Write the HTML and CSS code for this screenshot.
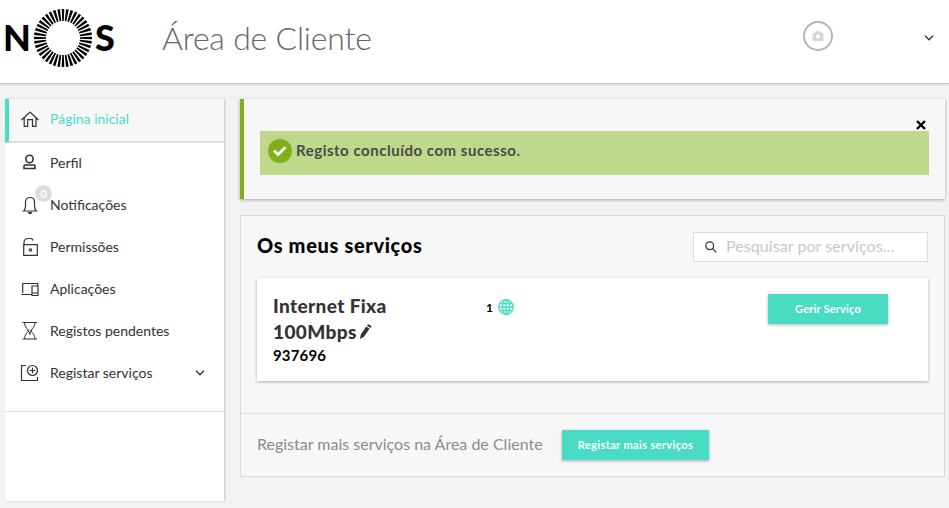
FILE: index.html
```
<!DOCTYPE html>
<html lang="pt">
<head>
  <meta charset="UTF-8">
  <meta name="viewport" content="width=device-width, initial-scale=1.0">
  <title>Área de Cliente</title>
  <link rel="stylesheet" href="styles.css">
</head>
<body>
  <header class="header">
    <a class="logo">
      <span class="logo-n">N</span>
      <svg class="logo-o" width="58" height="58" viewBox="0 0 58 58">
        <circle cx="29" cy="29" r="23" fill="none" stroke="#000" stroke-width="12" pathLength="400" stroke-dasharray="6 4" stroke-dashoffset="3"/>
      </svg>
      <span class="logo-s">S</span>
    </a>
    <h1 class="title">Área de Cliente</h1>
    <div class="user">
      <div class="avatar">
        <svg width="12" height="12" viewBox="0 0 12 12">
          <path fill="#d6d6d6" fill-rule="evenodd" d="M1.500 3H3l1-1.700h4L9 3h1.500q1 0 1 1v6q0 1-1 1h-9q-1 0-1-1V4q0-1 1-1zM6 4.300a2.100 2.100 0 1 0 0 4.200a2.100 2.100 0 1 0 0-4.200z"/>
        </svg>
      </div>
      <svg class="arrow" width="10" height="6" viewBox="0 0 10 6"><path d="M1 .8l4 4 4-4"/></svg>
    </div>
  </header>

  <div class="wrapper">
    <nav class="sidebar">
      <ul class="menu">
        <li class="active">
          <svg class="icon" viewBox="0 0 20 20"><path d="M1.500 11L10 3l8.500 8M4.200 9v8.300h3.500v-6.600h4.800v6.600h3.500V9"/></svg>
          <span>Página inicial</span>
        </li>
        <li>
          <svg class="icon thick" viewBox="0 0 20 20"><circle cx="9.500" cy="6" r="3.700"/><path d="M5 12h9a1 1 0 0 1 1 1v2.500h-11v-2.500a1 1 0 0 1 1-1z"/></svg>
          <span>Perfil</span>
        </li>
        <li>
          <svg class="icon" viewBox="0 0 20 20"><path d="M2.500 16h15M4 16c1-1.500 1.500-3 1.500-5V7c0-2.800 1.800-4.500 4.500-4.500s4.500 1.700 4.500 4.500v4c0 2 .5 3.500 1.500 5"/><path d="M8.500 17.500a1.600 1.600 0 0 0 3 0z" fill="#333"/></svg>
          <i class="badge">0</i>
          <span>Notificações</span>
        </li>
        <li>
          <svg class="icon" viewBox="0 0 20 20"><path d="M4 8.500V5.500c0-3 2-4 4.500-4h2c1.500 0 2.200.6 2.500 2M3.700 7.700h13.600v10.700H3.700z"/><circle cx="10.500" cy="13" r="1.200"/></svg>
          <span>Permissões</span>
        </li>
        <li>
          <svg class="icon" viewBox="0 0 20 20"><path d="M2.700 14V4.500h15V7M1.200 15.500h10.500M12 7h6v9.500h-6zM12 14h6"/></svg>
          <span>Aplicações</span>
        </li>
        <li>
          <svg class="icon thin" viewBox="0 0 20 20"><path d="M2.500 1.500h14.500M2.500 18h14.500M4.500 1.500c0 4 2 5.500 4.500 8.300-2.500 2.700-4.500 4.200-4.500 8.200M15 1.500c0 4-2 5.500-4.500 8.300 2.500 2.700 4.500 4.200 4.500 8.200M7.500 9l2.300 3.200L12 9M9.800 11v3"/></svg>
          <span>Registos pendentes</span>
        </li>
        <li>
          <svg class="icon" viewBox="0 0 20 20"><path d="M6 2.500H1.500V17.500h16V14"/><circle cx="12.500" cy="7.500" r="5"/><path d="M12.500 4.700v5.600M9.700 7.500h5.600"/></svg>
          <span>Registar serviços</span>
          <svg class="arrow" width="10" height="6" viewBox="0 0 10 6"><path d="M1 .8l4 4 4-4"/></svg>
        </li>
      </ul>
    </nav>

    <main class="content">
      <section class="alert">
        <svg class="close" width="10" height="10" viewBox="0 0 10 10"><path d="M1 1l8 8M9 1L1 9"/></svg>
        <div class="alert-msg">
          <svg width="24" height="24" viewBox="0 0 24 24"><circle cx="12" cy="12" r="12" fill="#7fb01b"/><path d="M6 11.500l4 4 7.500-7.300" fill="none" stroke="#fff" stroke-width="2.800"/></svg>
          <span>Registo concluído com sucesso.</span>
        </div>
      </section>

      <section class="panel">
        <div class="panel-head">
          <h2>Os meus serviços</h2>
          <label class="search">
            <svg width="12" height="12" viewBox="0 0 12 12"><circle cx="4.700" cy="4.700" r="3.900"/><path d="M7.500 7.500l3.800 3.800"/></svg>
            <input type="text" placeholder="Pesquisar por serviços...">
          </label>
        </div>
        <div class="card">
          <div class="service">
            <h3>Internet Fixa<br><span>100Mbps</span><svg width="12" height="15" viewBox="0 0 12 15"><path fill="#333" d="M0 15l.8-4.500L6.300 2.600l3.200 2.200-5.500 7.900zM7 1.600L7.900.4Q8.200 0 8.600.2l2.600 1.800q.4.3.1.700l-.9 1.300z"/></svg></h3>
            <p>937696</p>
          </div>
          <div class="count">
            <span>1</span>
            <svg width="16" height="16" viewBox="0 0 16 16"><circle cx="8" cy="8" r="7.300"/><ellipse cx="8" cy="8" rx="3.600" ry="7.300"/><path d="M8 .7v14.600M.7 8h14.600M2 4.500h12M2 11.500h12"/></svg>
          </div>
          <button class="btn manage">Gerir Serviço</button>
        </div>
        <div class="panel-foot">
          <p>Registar mais serviços na Área de Cliente</p>
          <button class="btn more">Registar mais serviços</button>
        </div>
      </section>
    </main>
  </div>
</body>
</html>
```
FILE: styles.css
```
*{
  box-sizing: border-box;
  margin: 0;
  padding: 0;
}
body{
  height: 508px;
  background: #f2f2f2;
  color: #333;
  font-family: Lato, "Open Sans", sans-serif;
  font-size: 14px;
  overflow: hidden;
}
svg{
  display: block;
  flex: none;
}
.header{
  display: flex;
  align-items: center;
  height: 84px;
  padding: 0 15px 8px 3px;
  background: #fff;
  border-bottom: 1px solid #c4c4c4;
  box-shadow: 0 1px 2px rgba(0,0,0,.12);
}
.logo{
  display: flex;
  align-items: center;
  width: 159px;
  color: #000;
  font-size: 36px;
  font-weight: 900;
  line-height: 56px;
}
.logo-n{
  width: 31px;
  padding-bottom: 1px;
}
.logo-s{
  margin-left: 3px;
  padding-bottom: 1px;
}
.title{
  color: #666;
  font-size: 32px;
  font-weight: 300;
  letter-spacing: -.2px;
  line-height: 40px;
  white-space: nowrap;
}
.user{
  display: flex;
  align-items: center;
  justify-content: space-between;
  width: 131px;
  margin-left: auto;
  margin-top: -4px;
}
.user .arrow{
  margin-top: 4px;
}
.avatar{
  display: flex;
  align-items: center;
  justify-content: center;
  width: 30px;
  height: 30px;
  border: 2px solid #b5b5b5;
  border-radius: 50%;
}
.arrow{
  fill: none;
  stroke: #333;
  stroke-width: 1.3;
}
.wrapper{
  display: flex;
  gap: 16px;
  padding: 15px 4px 0 5px;
}
.sidebar{
  width: 219px;
  height: 402px;
  background: #fff;
  box-shadow: 1px 0 2px rgba(0,0,0,.18);
}
.menu{
  list-style: none;
  padding-bottom: 16px;
  border-bottom: 1px solid #ddd;
}
.menu li{
  position: relative;
  display: flex;
  align-items: center;
  height: 42px;
  padding: 0 19px 2px 15px;
  white-space: nowrap;
}
.menu li span{
  margin-left: 10px;
  padding-bottom: 2px;
}
.menu .active{
  height: 44px;
  padding-left: 11px;
  background: #f7f7f7;
  border-left: 4px solid #4adbc5;
  border-bottom: 2px solid #ddd;
  color: #4adbc5;
}
.menu .arrow{
  margin-left: auto;
}
.icon{
  width: 20px;
  height: 20px;
  fill: none;
  stroke: #333;
  stroke-width: 1.2;
}
.thick{
  stroke-width: 1.6;
}
.thin{
  stroke-width: 1;
}
.badge{
  position: absolute;
  left: 30px;
  top: 0;
  width: 17px;
  height: 17px;
  border-radius: 50%;
  background: #ddd;
  color: #fff;
  font-size: 11px;
  font-style: normal;
  font-weight: 700;
  line-height: 17px;
  text-align: center;
}
.content{
  flex: 1;
}
.alert{
  position: relative;
  height: 100px;
  padding: 32px 16px 0;
  background: #f7f7f7;
  border-left: 4px solid #7fb01b;
  box-shadow: 0 1px 3px rgba(0,0,0,.3);
}
.close{
  position: absolute;
  right: 19px;
  top: 21px;
  stroke: #000;
  stroke-width: 2.4;
}
.alert-msg{
  display: flex;
  align-items: center;
  gap: 4px;
  height: 44px;
  padding: 0 8px 4px;
  background: #bfd88b;
  color: #4a4a4a;
  font-size: 15px;
  font-weight: 700;
  letter-spacing: .52px;
}
.alert-msg span{
  padding-bottom: 2px;
}
.panel{
  height: 262px;
  margin-top: 16px;
  background: #f7f7f7;
  border: 1px solid #ddd;
}
.panel-head{
  display: flex;
  justify-content: space-between;
  padding: 16px 16px 0;
}
.panel-head h2{
  color: #000;
  font-size: 20px;
  font-weight: 900;
  letter-spacing: .65px;
  line-height: 26px;
}
.search{
  display: flex;
  align-items: center;
  width: 235px;
  height: 30px;
  padding-left: 11px;
  background: #fff;
  border: 1px solid #ddd;
}
.search svg{
  fill: none;
  stroke: #333;
  stroke-width: 1.2;
}
.search input{
  flex: 1;
  min-width: 0;
  margin-left: 9px;
  padding-bottom: 3px;
  border: none;
  outline: none;
  font-family: inherit;
  font-size: 16px;
  letter-spacing: .07px;
}
.search input::placeholder{
  color: #c8c8c8;
}
.card{
  display: flex;
  align-items: flex-start;
  height: 103px;
  margin: 16px 16px 0;
  padding: 16px 40px 0 16px;
  background: #fff;
  box-shadow: 0 1px 3px rgba(0,0,0,.3);
}
.service{
  width: 213px;
}
.service h3{
  font-size: 19px;
  font-weight: 900;
  letter-spacing: .38px;
  line-height: 26px;
  margin-top: -1px;
}
.service h3 svg{
  display: inline-block;
  margin-left: 3px;
}
.service p{
  color: #000;
  font-size: 15px;
  font-weight: 700;
  letter-spacing: .15px;
  line-height: 20px;
}
.count{
  display: flex;
  align-items: center;
  gap: 5px;
  margin-top: 5px;
  color: #000;
  font-size: 12px;
  font-weight: 700;
}
.count svg{
  fill: none;
  stroke: #4adbc5;
  stroke-width: 1.3;
}
.btn{
  height: 30px;
  padding-bottom: 1px;
  border: none;
  background: #4adbc5;
  box-shadow: 0 1px 3px rgba(0,0,0,.3);
  color: #fff;
  font-family: inherit;
  font-size: 11px;
  font-weight: 700;
  letter-spacing: .2px;
  white-space: nowrap;
}
.manage{
  width: 120px;
  margin-left: auto;
}
.more{
  width: 147px;
  letter-spacing: .38px;
}
.panel-foot{
  display: flex;
  align-items: center;
  height: 63px;
  margin-top: 32px;
  padding: 0 16px;
  border-top: 1px solid #ddd;
}
.panel-foot p{
  width: 305px;
  padding-bottom: 4px;
  color: #8c8c8c;
  font-size: 16px;
  white-space: nowrap;
}
```
